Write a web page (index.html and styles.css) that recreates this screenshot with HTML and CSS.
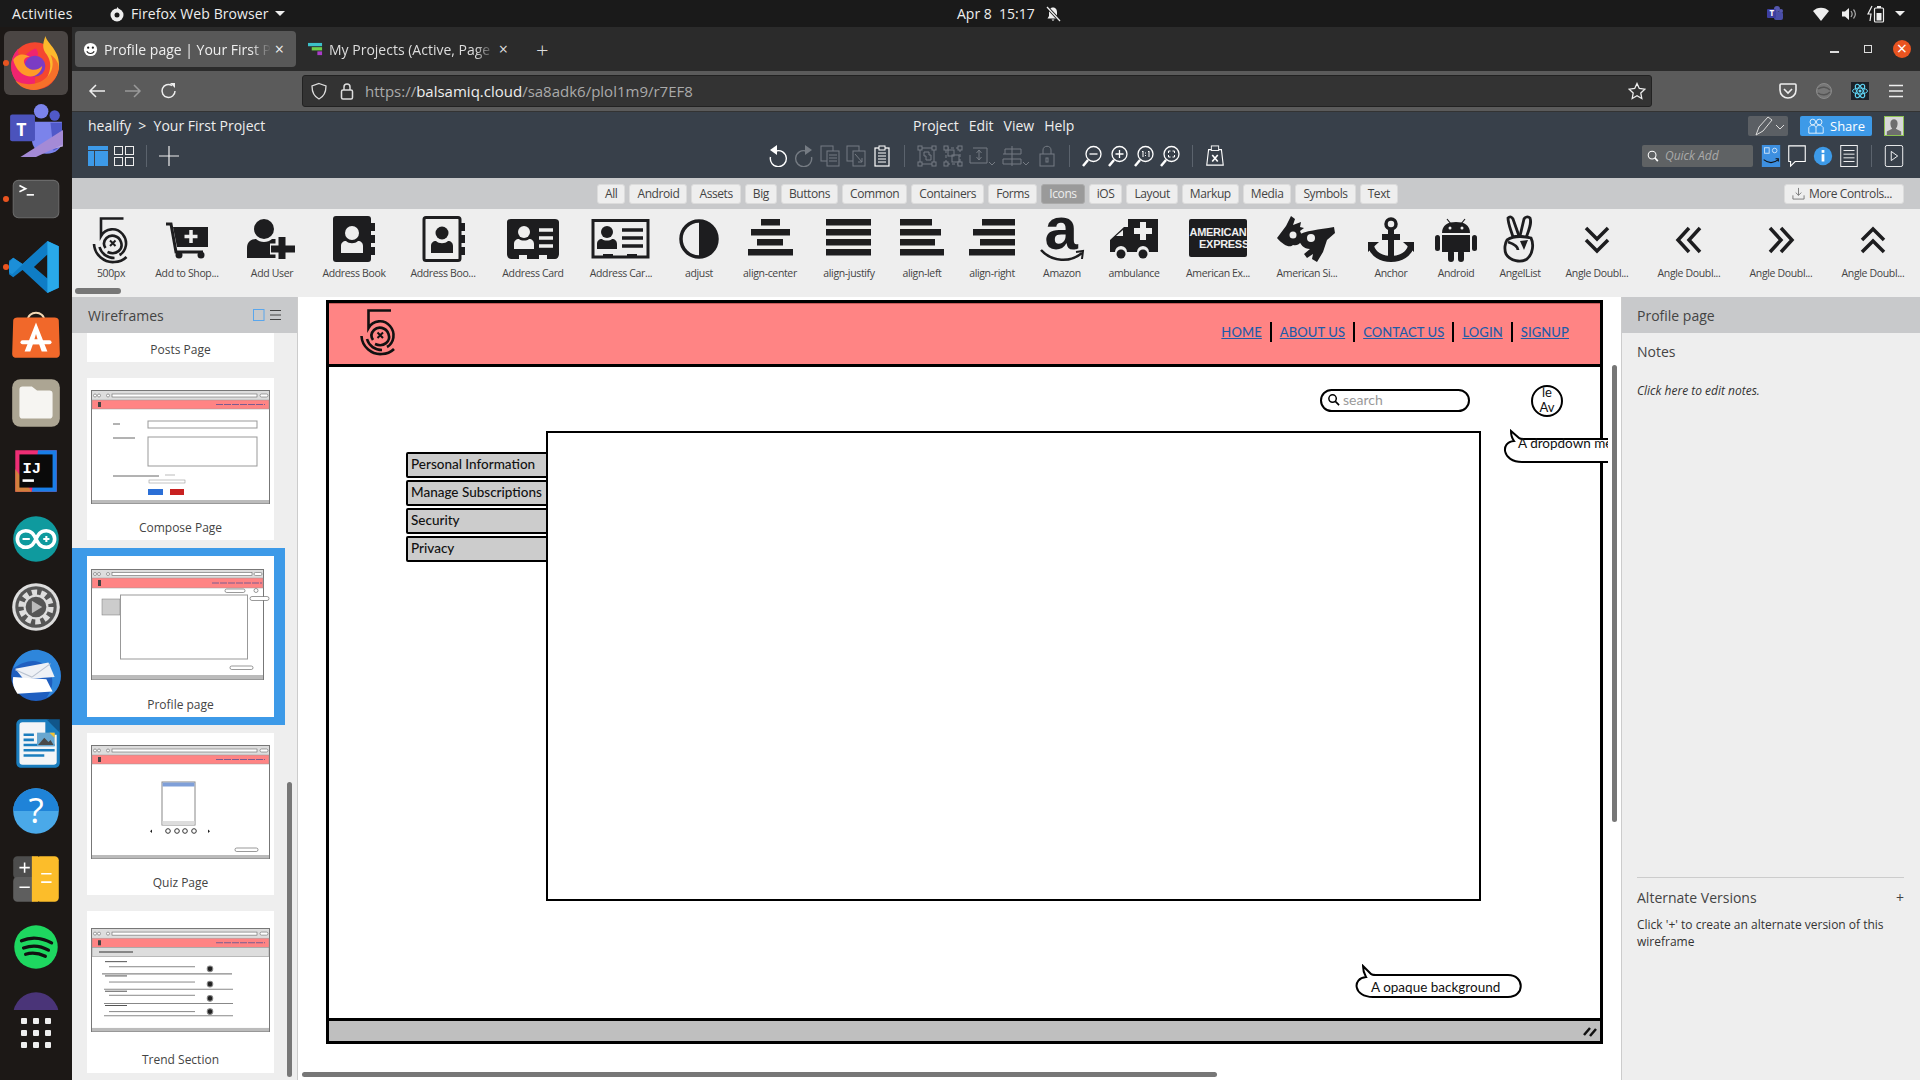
FILE: index.html
```html
<!DOCTYPE html>
<html lang="en">
<head>
    <meta charset="UTF-8">
    <title>Profile page | Your First Project</title>
    <link rel="stylesheet" href="styles.css">
</head>
<body>

    <!-- shared drawings -->
    <svg class="defs" width="0" height="0">
        <symbol id="logo500" viewBox="0 0 37 48">
            <g fill="none" stroke="currentColor" stroke-width="2.6">
                <path d="M31 2.500H8.500V20C13 12 24 11 30 18C36 25 34 35 27 39"/>
                <path d="M15 36C24 40 31 33 28.500 26C26 19 18 18 14 22C11 25 11 29 13 32"/>
                <path d="M1.500 28C2 39 12 47 22 46C27 46 31 44 34 41"/>
                <path d="M7 31C9 38 15 42 22 42"/>
                <path d="M17.500 24.500L23 30M23 24.500L17.500 30" stroke-width="2"/>
            </g>
        </symbol>
        <symbol id="magnifier" viewBox="0 0 20 20">
            <circle cx="11.500" cy="8.500" r="6.500" fill="none" stroke="currentColor" stroke-width="1.700"/>
            <path d="M7 13L2 18.500" stroke="currentColor" stroke-width="2.800"/>
        </symbol>
    </svg>

    <!-- barra di sistema -->
    <header class="topbar">
        <div class="topbar-left">
            <span class="activities">Activities</span>
            <svg class="topbar-ff" viewBox="0 0 16 16"><circle cx="8" cy="9" r="6.500" fill="#eee"/><circle cx="8" cy="9" r="2.500" fill="#1a1a1a"/><path d="M8 1C11 3 10 5 8 6Z" fill="#eee"/></svg>
            <span class="ff-name">Firefox Web Browser</span>
            <span class="caret"></span>
        </div>
        <div class="topbar-clock">
            <span>Apr 8&nbsp;&nbsp;15:17</span>
            <svg class="bell" viewBox="0 0 16 16"><path d="M8 1.500C5 1.500 4 4 4 6V10L2.500 12.500H13.500L12 10V6C12 4 11 1.500 8 1.500ZM6.500 13.500H9.500L8 15Z" fill="#eee"/><path d="M2 1L15 15" stroke="#1a1a1a" stroke-width="3"/><path d="M2 1L15 15" stroke="#eee" stroke-width="1.300"/></svg>
        </div>
        <div class="topbar-tray">
            <svg class="tray-teams" viewBox="0 0 18 18"><circle cx="11" cy="4" r="3" fill="#5558af"/><circle cx="15" cy="6" r="2" fill="#5558af"/><rect x="8" y="7" width="9" height="8" rx="2" fill="#4a4ea8"/><rect x="1" y="4" width="9" height="9" rx="1" fill="#3d3fa0"/><text x="3.500" y="11" class="tray-t">T</text></svg>
            <svg class="tray-ico wifi" viewBox="0 0 16 16"><path d="M0 5C4 0.500 12 0.500 16 5L8 15Z" fill="#eee"/></svg>
            <svg class="tray-ico vol" viewBox="0 0 16 16"><path d="M1 5.500H4L8 2V14L4 10.500H1Z" fill="#eee"/><path d="M10 5C11.500 7 11.500 9 10 11M12.500 3.500C15 6.500 15 9.500 12.500 12.500" fill="none" stroke="#aaa" stroke-width="1.200"/></svg>
            <svg class="tray-ico bat" viewBox="0 0 18 18"><path d="M5 1L1 9H4L3 16" fill="none" stroke="#eee" stroke-width="1.200"/><rect x="7.500" y="3" width="9" height="14" rx="1" fill="none" stroke="#eee" stroke-width="1.200"/><rect x="10" y="1" width="4" height="2" fill="#eee"/><rect x="9.500" y="8" width="5" height="7.500" fill="#eee"/></svg>
            <span class="caret"></span>
        </div>
    </header>

    <div class="desktop">

        <!-- dock -->
        <nav class="dock">
            <div class="dock-list">
                <div class="dock-item dock-active running">
                    <svg viewBox="0 0 56 56">
                        <circle cx="27" cy="31" r="23" fill="#f5462f"/>
                        <path d="M27 54C14 54 4 44 4 31C4 24 7 18 11 14C10 20 12 24 16 25C17 19 24 15 28 14C33 22 27 20 27 31Z" fill="#f0246f"/>
                        <path d="M37 2C39 10 52 16 50 33C48 44 38 52 28 53C42 44 46 28 37 18C33 12 36 6 37 2Z" fill="#fcb92c"/>
                        <path d="M50 33C49 44 38 53 26 54C18 54 12 51 8 45C16 50 30 50 38 42C44 37 46 28 42 20C47 23 50 28 50 33Z" fill="#f6702a"/>
                        <circle cx="27" cy="31" r="10" fill="#7b3cc4"/>
                        <path d="M6 25C10 18 18 19 22 22C18 22 15 25 17 29C20 36 30 36 34 31C33 39 25 43 18 40C12 38 8 32 6 25Z" fill="#ff9a28"/>
                    </svg>
                </div>
                <div class="dock-item">
                    <svg viewBox="0 0 56 56">
                        <circle cx="33" cy="9" r="7" fill="#7b83eb"/><circle cx="46" cy="13" r="5" fill="#5059c9"/>
                        <path d="M24 19H53V37C53 45 47 50 38 50C30 50 24 44 24 36Z" fill="#7b83eb"/>
                        <path d="M42 20H53V36C53 41 50 45 45 47Z" fill="#5059c9"/>
                        <rect x="3" y="12" width="24" height="26" rx="2" fill="#4b53bc"/>
                        <text x="9" y="33" class="dock-t">T</text>
                        <path d="M54 28V43L13 53L26 50Z" fill="#b8a6e0"/><path d="M13 53H28L54 41V27Z" fill="#a48ad6"/>
                    </svg>
                </div>
                <div class="dock-item running">
                    <svg viewBox="0 0 56 56">
                        <rect x="6" y="10" width="44" height="36" rx="5" fill="#4f4f4f" stroke="#6a6a6a"/>
                        <path d="M12 15L18 18L12 21" fill="none" stroke="#fff" stroke-width="1.600"/><path d="M19 24H26" stroke="#fff" stroke-width="1.600"/>
                    </svg>
                </div>
                <div class="dock-item running">
                    <svg viewBox="0 0 56 56">
                        <path d="M39 3L50 8V48L39 53L15 31L6 38L2 35V22L6 19L15 25ZM39 16L26 28L39 39Z" fill="#0f7dc6"/>
                        <path d="M39 3L50 8V48L39 53Z" fill="#29a9ea"/>
                        <path d="M39 3L5 35L2 33V24L6 19L15 25Z" fill="#1c8fd8"/>
                    </svg>
                </div>
                <div class="dock-item">
                    <svg viewBox="0 0 56 56">
                        <path d="M20 14C20 4 36 4 36 14" fill="none" stroke="#f4d9b5" stroke-width="2"/>
                        <path d="M6 14C6 12 8 11 10 11H46C48 11 50 12 50 14L51 46C51 49 49 50 46 50H10C7 50 5 49 5 46Z" fill="#f1682a"/>
                        <path d="M28 16L39 44H33.500L31 37H25L22.500 44H17ZM26.500 32H29.500L28 27Z" fill="#fff"/>
                        <rect x="13" y="33" width="30" height="4" rx="2" fill="#fff"/>
                    </svg>
                </div>
                <div class="dock-item">
                    <svg viewBox="0 0 56 56">
                        <rect x="5" y="5" width="46" height="46" rx="8" fill="#aca593"/>
                        <path d="M12 15C12 13 13 12 15 12H24L29 16H41C43 16 44 17 44 19V40C44 42 43 43 41 43H15C13 43 12 42 12 40Z" fill="#f6f5f2"/>
                    </svg>
                </div>
                <div class="dock-item">
                    <svg viewBox="0 0 56 56">
                        <path d="M8 8H30L48 8V30L48 48H8Z" fill="#ee2e75"/>
                        <path d="M8 26L8 48H24Z" fill="#d2803c"/>
                        <path d="M30 8H48V48H24Z" fill="#197ee8"/>
                        <rect x="12" y="12" width="32" height="32" fill="#0a0a0a"/>
                        <text x="15" y="30" class="dock-ij">IJ</text>
                        <rect x="15" y="36" width="11" height="2.500" fill="#fff"/>
                    </svg>
                </div>
                <div class="dock-item">
                    <svg viewBox="0 0 56 56">
                        <circle cx="28" cy="28" r="22" fill="#0f9a9e"/>
                        <path d="M18 20C14 20 10 23 10 28C10 33 14 36 18 36C24 36 26 32 28 28C30 24 32 20 38 20C42 20 46 23 46 28C46 33 42 36 38 36C32 36 30 32 28 28C26 24 24 20 18 20Z" fill="none" stroke="#fff" stroke-width="3.500"/>
                        <path d="M15 28H22M35 28H41M38 25V31" stroke="#fff" stroke-width="2"/>
                    </svg>
                </div>
                <div class="dock-item">
                    <svg viewBox="0 0 56 56">
                        <circle cx="28" cy="28" r="23" fill="#ddd"/>
                        <circle cx="28" cy="28" r="20" fill="#555"/>
                        <circle cx="28" cy="28" r="14" fill="none" stroke="#ddd" stroke-width="6" stroke-dasharray="5 3.800"/>
                        <circle cx="28" cy="28" r="11" fill="none" stroke="#ddd" stroke-width="2"/>
                        <path d="M24 22L34 28L24 34Z" fill="#bbb"/>
                    </svg>
                </div>
                <div class="dock-item">
                    <svg viewBox="0 0 56 56">
                        <circle cx="28" cy="29" r="24" fill="#1f5fc0"/>
                        <path d="M6 22C9 8 22 2 32 4C44 6 52 16 52 29C52 38 46 47 38 50C46 40 46 26 36 18C28 12 16 14 6 22Z" fill="#2e86db"/>
                        <path d="M8 22L40 16L46 30L16 32Z" fill="#eef1f6"/>
                        <path d="M6 30L38 32L44 44L10 46C6 40 5 36 6 30Z" fill="#fff"/>
                        <path d="M8 23L24 30L42 17" fill="none" stroke="#b9c2d0"/>
                    </svg>
                </div>
                <div class="dock-item">
                    <svg viewBox="0 0 56 56">
                        <path d="M9 10C9 7 11 5 14 5H40L51 16V47C51 50 49 52 46 52H14C11 52 9 50 9 47Z" fill="#1a7dbe"/>
                        <path d="M12 11C12 9 13 8 15 8H37V20H48V46C48 48 47 49 45 49H15C13 49 12 48 12 46Z" fill="#f3f5f7"/>
                        <path d="M38 5L51 18V5Z" fill="#10568a"/>
                        <path d="M16 20H26M16 25H26M16 30H46M16 35H46M16 40H36" stroke="#1a7dbe" stroke-width="2.500"/>
                        <rect x="29" y="18" width="17" height="13" fill="#68a7d0"/><path d="M30 30L36 23L40 27L42 25L45 30Z" fill="#4a4a4a"/><path d="M41 18H46V23Z" fill="#f2c230"/>
                    </svg>
                </div>
                <div class="dock-item">
                    <svg viewBox="0 0 56 56">
                        <circle cx="28" cy="28" r="22" fill="#4aa9e9"/>
                        <path d="M6 28A22 22 0 0 1 50 28Z" fill="#1f83d8"/>
                        <text x="28" y="40" class="dock-help">?</text>
                    </svg>
                </div>
                <div class="dock-item">
                    <svg viewBox="0 0 56 56">
                        <rect x="6" y="6" width="22" height="22" rx="4" fill="#4d4d4d"/>
                        <rect x="6" y="26" width="22" height="24" rx="4" fill="#5e5e5e"/>
                        <rect x="28" y="6" width="22" height="44" rx="4" fill="#fcbd2a"/>
                        <rect x="24" y="6" width="6" height="44" fill="#fcbd2a"/>
                        <path d="M12 17H22M17 12V22M12 36H22M33 23H43M33 31H43" stroke="#fff" stroke-width="1.500"/>
                    </svg>
                </div>
                <div class="dock-item">
                    <svg viewBox="0 0 56 56">
                        <circle cx="28" cy="28" r="21" fill="#1ed760"/>
                        <path d="M14 22C23 18 34 19 43 24M16 29C24 26 33 27 40 31M18 35C24 33 31 34 37 37" fill="none" stroke="#111" stroke-width="3.200" stroke-linecap="round"/>
                    </svg>
                </div>
                <div class="dock-item">
                    <svg viewBox="0 0 56 56"><circle cx="28" cy="28" r="22" fill="#4a3478"/></svg>
                </div>
            </div>
            <div class="dock-apps">
                <i></i><i></i><i></i><i></i><i></i><i></i><i></i><i></i><i></i>
            </div>
        </nav>

        <div class="window">

            <!-- schede firefox -->
            <div class="tabs-row">
                <div class="tab tab-active">
                    <svg class="favicon" viewBox="0 0 16 16"><circle cx="8" cy="8" r="7" fill="#fff"/><circle cx="5.500" cy="6" r="1.200" fill="#222"/><circle cx="10.500" cy="6" r="1.200" fill="#222"/><path d="M4 10C6 13 10 13 12 10" fill="none" stroke="#222" stroke-width="1.200"/></svg>
                    <span class="tab-title">Profile page | Your First P</span>
                    <span class="tab-x">&times;</span>
                </div>
                <div class="tab tab-other">
                    <svg class="favicon" viewBox="0 0 16 16"><rect x="0" y="1" width="15" height="3.500" fill="#3cc0c8"/><rect x="4" y="5.500" width="11" height="3.500" fill="#6fce4c"/><rect x="10" y="10" width="5" height="4" fill="#a93cc8"/></svg>
                    <span class="tab-title">My Projects (Active, Page</span>
                    <span class="tab-x">&times;</span>
                </div>
                <span class="tab-new">+</span>
                <div class="win-controls">
                    <span class="win-min"></span>
                    <span class="win-max"></span>
                    <span class="win-close">&times;</span>
                </div>
            </div>

            <!-- barra indirizzi -->
            <div class="nav-row">
                <svg class="nav-ico" viewBox="0 0 20 20"><path d="M18 10H3M9 4L3 10L9 16" fill="none" stroke="#eee" stroke-width="1.500"/></svg>
                <svg class="nav-ico" viewBox="0 0 20 20"><path d="M2 10H17M11 4L17 10L11 16" fill="none" stroke="#999" stroke-width="1.500"/></svg>
                <svg class="nav-ico" viewBox="0 0 20 20"><path d="M16 10A6.500 6.500 0 1 1 13 4.500" fill="none" stroke="#eee" stroke-width="1.500"/><path d="M11 2H16V7Z" fill="#eee"/></svg>
                <div class="urlbar">
                    <svg class="url-ico" viewBox="0 0 16 18"><path d="M8 1.500L15 4C15 10 13 14.500 8 17C3 14.500 1 10 1 4Z" fill="none" stroke="#ddd" stroke-width="1.300"/></svg>
                    <svg class="url-ico" viewBox="0 0 16 18"><rect x="2.500" y="8" width="11" height="9" rx="1.500" fill="none" stroke="#ddd" stroke-width="1.500"/><path d="M5 8V5C5 1 11 1 11 5V8" fill="none" stroke="#ddd" stroke-width="1.500"/></svg>
                    <span class="url-text">https://<b>balsamiq.cloud</b>/sa8adk6/plol1m9/r7EF8</span>
                    <svg class="url-star" viewBox="0 0 18 18"><path d="M9 1.500L11.300 6.500L16.800 7.200L12.800 11L13.800 16.500L9 13.800L4.200 16.500L5.200 11L1.200 7.200L6.700 6.500Z" fill="none" stroke="#eee" stroke-width="1.300"/></svg>
                </div>
                <div class="nav-tools">
                    <svg viewBox="0 0 18 18"><path d="M2 2H16C16.500 2 17 2.500 17 3V8C17 13 13 16 9 16C5 16 1 13 1 8V3C1 2.500 1.500 2 2 2Z" fill="none" stroke="#eee" stroke-width="1.600"/><path d="M5 7L9 11L13 7" fill="none" stroke="#eee" stroke-width="1.600"/></svg>
                    <svg viewBox="0 0 18 18"><circle cx="9" cy="9" r="7.500" fill="#777" stroke="#8a8a8a"/><path d="M3 7C7 4 12 5 15 8M3 11C7 14 12 13 15 10" fill="none" stroke="#555" stroke-width="1.500"/></svg>
                    <svg viewBox="0 0 18 18"><rect width="18" height="18" fill="#1c2128"/><g fill="none" stroke="#5fd4f4" stroke-width="1"><ellipse cx="9" cy="9" rx="7.500" ry="3"/><ellipse cx="9" cy="9" rx="7.500" ry="3" transform="rotate(60 9 9)"/><ellipse cx="9" cy="9" rx="7.500" ry="3" transform="rotate(120 9 9)"/></g><circle cx="9" cy="9" r="1.500" fill="#5fd4f4"/></svg>
                    <svg viewBox="0 0 18 18"><path d="M2 3.500H16M2 9H16M2 14.500H16" stroke="#eee" stroke-width="1.500"/></svg>
                </div>
            </div>

            <!-- testata balsamiq -->
            <div class="app-head">
                <div class="head-row head-row-top">
                    <div class="crumbs">healify &nbsp;&gt;&nbsp; Your First Project</div>
                    <div class="menu"><span>Project</span><span>Edit</span><span>View</span><span>Help</span></div>
                    <div class="head-right">
                        <div class="pen-btn">
                            <svg viewBox="0 0 28 20"><path d="M2 19L5 11L14 1L18 4L9 15Z" fill="none" stroke="#ddd" stroke-width="1"/><path d="M22 9L26 13L30 9" fill="none" stroke="#ddd" stroke-width="1"/></svg>
                        </div>
                        <div class="share-btn">
                            <svg viewBox="0 0 20 20"><circle cx="6" cy="5" r="3.500" fill="none" stroke="#fff"/><circle cx="14" cy="5" r="3.500" fill="none" stroke="#fff"/><path d="M1 19V12L4 9H8L10 12L12 9H16L19 12V19ZM10 12V19" fill="none" stroke="#fff"/></svg>
                            <span>Share</span>
                        </div>
                        <div class="user-pic">
                            <svg viewBox="0 0 20 20"><rect width="20" height="20" fill="#d8d8d8"/><path d="M6 7C6 1 14 1 14 7C14 10 13 12 12 13L18 16V20H2V16L8 13C7 12 6 10 6 7Z" fill="#6e6e6e"/></svg>
                        </div>
                    </div>
                </div>
                <div class="head-row head-row-tools">
                    <div class="view-btns">
                        <svg viewBox="0 0 20 20"><rect width="20" height="20" fill="#3d9ae8"/><path d="M0 4.500H20M6.500 4.500V20" stroke="#38404a"/></svg>
                        <svg viewBox="0 0 20 20"><g fill="none" stroke="#eee"><rect x="0.500" y="0.500" width="8" height="8"/><rect x="11.500" y="0.500" width="8" height="8"/><rect x="0.500" y="11.500" width="8" height="8"/><rect x="11.500" y="11.500" width="8" height="8"/></g></svg>
                        <i class="tb-sep"></i>
                        <svg viewBox="0 0 20 20"><path d="M10 0V20M0 10H20" stroke="#eee" stroke-width="1.200"/></svg>
                    </div>
                    <div class="toolbar">
                        <svg viewBox="0 0 20 22"><path d="M8 6A8 8 0 1 1 2.500 12" fill="none" stroke="#fff" stroke-width="1.400"/><path d="M9 0V10L2 5Z" fill="#fff"/></svg>
                        <svg class="off" viewBox="0 0 20 22"><path d="M12 6A8 8 0 1 0 17.500 12" fill="none" stroke="#757b83" stroke-width="1.400"/><path d="M11 0V10L18 5Z" fill="#757b83"/></svg>
                        <svg class="off" viewBox="0 0 20 22"><g fill="#38404a" stroke="#757b83"><rect x="1" y="1" width="12" height="15"/><rect x="7" y="6" width="12" height="15"/></g><path d="M9 10H17M9 13H17M9 16H17" stroke="#757b83"/></svg>
                        <svg class="off" viewBox="0 0 20 22"><g fill="#38404a" stroke="#757b83"><rect x="1" y="1" width="12" height="15"/><rect x="7" y="6" width="12" height="15"/></g><path d="M9 9L16 17M16 13V17H12" fill="none" stroke="#757b83"/></svg>
                        <svg viewBox="0 0 20 22"><rect x="3" y="3" width="14" height="18" fill="#38404a" stroke="#fff" stroke-width="1.200"/><rect x="7" y="1" width="6" height="4" fill="#38404a" stroke="#fff"/><path d="M6 8H14M6 11H14M6 14H14M6 17H14" stroke="#fff"/></svg>
                        <i class="tb-sep"></i>
                        <svg viewBox="0 0 20 22"><g fill="none" stroke="#757b83"><rect x="3" y="3" width="14" height="16"/><path d="M7 7H12V10H14V15H9V11H7Z"/></g><g fill="#38404a" stroke="#757b83"><rect x="1" y="1" width="4" height="4"/><rect x="15" y="1" width="4" height="4"/><rect x="1" y="17" width="4" height="4"/><rect x="15" y="17" width="4" height="4"/></g></svg>
                        <svg viewBox="0 0 20 22"><g fill="none" stroke="#757b83"><rect x="3" y="3" width="14" height="16" stroke-dasharray="3 2"/><rect x="5" y="5" width="6" height="6"/><rect x="9" y="10" width="7" height="7"/></g><g fill="#38404a" stroke="#757b83"><rect x="1" y="1" width="4" height="4"/><rect x="15" y="1" width="4" height="4"/><rect x="1" y="17" width="4" height="4"/><rect x="15" y="17" width="4" height="4"/></g></svg>
                        <svg class="caret-ico" viewBox="0 0 27 22"><g fill="none" stroke="#757b83"><path d="M4 3H18V18H1V10"/><path d="M10 5V15M7.500 8L10 5L12.500 8M7.500 12L10 15L12.500 12"/><path d="M20 17L23 20L26 17"/></g></svg>
                        <svg class="caret-ico" viewBox="0 0 27 22"><g fill="none" stroke="#757b83"><path d="M10 1V21M1 9H19V4H3V9M1 14H19V19H1Z"/><path d="M21 17L24 20L27 17"/></g></svg>
                        <svg class="tb-lock" viewBox="0 0 20 22"><g fill="none" stroke="#757b83"><rect x="3" y="9" width="14" height="12"/><path d="M6 9V5C6 0 14 0 14 5V9"/><rect x="9" y="13" width="2" height="4"/></g></svg>
                        <i class="tb-sep"></i>
                        <svg viewBox="0 0 20 22"><circle cx="11.500" cy="9" r="7.500" fill="none" stroke="#fff" stroke-width="1.300"/><path d="M6 15L1 21" stroke="#fff" stroke-width="2.500"/><path d="M7.500 9H15.500" stroke="#fff" stroke-width="1.300"/></svg>
                        <svg viewBox="0 0 20 22"><circle cx="11.500" cy="9" r="7.500" fill="none" stroke="#fff" stroke-width="1.300"/><path d="M6 15L1 21" stroke="#fff" stroke-width="2.500"/><path d="M7.500 9H15.500M11.500 5V13" stroke="#fff" stroke-width="1.300"/></svg>
                        <svg viewBox="0 0 20 22"><circle cx="11.500" cy="9" r="7.500" fill="none" stroke="#fff" stroke-width="1.300"/><path d="M6 15L1 21" stroke="#fff" stroke-width="2.500"/><path d="M8 7L9 6V12M14 7L15 6V12M11.500 7.500V8.500M11.500 10V11" fill="none" stroke="#fff"/></svg>
                        <svg viewBox="0 0 20 22"><circle cx="11.500" cy="9" r="7.500" fill="none" stroke="#fff" stroke-width="1.300"/><path d="M6 15L1 21" stroke="#fff" stroke-width="2.500"/><path d="M8.500 8V6H10.500M12.500 6H14.500V8M14.500 10V12H12.500M10.500 12H8.500V10" fill="none" stroke="#fff"/></svg>
                        <i class="tb-sep"></i>
                        <svg viewBox="0 0 20 24"><path d="M3 5H17L19 22H1Z" fill="none" stroke="#fff" stroke-width="1.200"/><rect x="6" y="1" width="8" height="5" fill="#38404a" stroke="#fff"/><path d="M7 11L13 18M13 11L7 18" stroke="#fff" stroke-width="1.800"/></svg>
                    </div>
                    <div class="head-right">
                        <div class="quick-add">
                            <svg viewBox="0 0 20 20"><use href="#magnifier"/></svg>
                            <span>Quick Add</span>
                        </div>
                        <div class="tb-side">
                            <svg viewBox="0 0 20 24"><rect width="20" height="24" fill="#3d8fe0"/><rect x="3" y="3" width="5" height="6" fill="none" stroke="#cfe4f8"/><circle cx="14" cy="6" r="2.500" fill="none" stroke="#cfe4f8"/><path d="M2 16C7 20 13 20 18 16M15 15H18V18" fill="none" stroke="#111" stroke-width="1.200"/></svg>
                            <svg viewBox="0 0 20 24"><path d="M1 1H19V18H8L3 23V18H1Z" fill="none" stroke="#fff" stroke-width="1.200"/></svg>
                            <svg viewBox="0 0 20 24"><circle cx="10" cy="12" r="10" fill="#3d9ae8"/><rect x="8.500" y="10" width="3" height="8" fill="#fff"/><rect x="8.500" y="5.500" width="3" height="3" fill="#fff"/></svg>
                            <svg viewBox="0 0 20 24"><rect x="1" y="0.500" width="18" height="23" fill="none" stroke="#fff"/><path d="M4 6H16M4 10H16M4 14H16M4 18H16" stroke="#fff"/></svg>
                            <i class="tb-sep"></i>
                            <svg viewBox="0 0 20 24"><rect x="0.500" y="0.500" width="19" height="23" rx="2" fill="none" stroke="#fff"/><path d="M7 7L14 12L7 17Z" fill="none" stroke="#fff"/></svg>
                        </div>
                    </div>
                </div>
            </div>

            <!-- categorie -->
            <div class="cats">
                <span class="cat">All</span>
                <span class="cat">Android</span>
                <span class="cat">Assets</span>
                <span class="cat">Big</span>
                <span class="cat">Buttons</span>
                <span class="cat">Common</span>
                <span class="cat">Containers</span>
                <span class="cat">Forms</span>
                <span class="cat cat-on">Icons</span>
                <span class="cat">iOS</span>
                <span class="cat">Layout</span>
                <span class="cat">Markup</span>
                <span class="cat">Media</span>
                <span class="cat">Symbols</span>
                <span class="cat">Text</span>
                <span class="cat more-controls">
                    <svg viewBox="0 0 14 14"><path d="M7 1V9M4 6L7 9L10 6M1 9V13H13V9" fill="none" stroke="#777"/></svg>
                    More Controls...
                </span>
            </div>

            <!-- libreria icone -->
            <div class="library">
                <div class="lib-item"><svg class="lib-logo"><use href="#logo500"/></svg><span>500px</span></div>
                <div class="lib-item">
                    <svg viewBox="-8 0 64 48"><path d="M3 8H8L13 36H40" fill="none" stroke="#1d1d1f" stroke-width="3"/><path d="M10 11H45V31H14Z" fill="#1d1d1f"/><path d="M28 14V27M21.500 20.500H34.500" stroke="#eee" stroke-width="3.500"/><circle cx="16" cy="39" r="3.500" fill="#1d1d1f"/><circle cx="38" cy="39" r="3.500" fill="#1d1d1f"/></svg>
                    <span>Add to Shop...</span>
                </div>
                <div class="lib-item">
                    <svg viewBox="-8 0 64 48"><circle cx="16" cy="13" r="10" fill="#1d1d1f"/><path d="M-1 42V32C-1 26 3 23 8 23C12 27 20 27 24 23H30V42Z" fill="#1d1d1f"/><path d="M33 21V45M22 33H47" stroke="#eee" stroke-width="11"/><path d="M34 21V43M23 33H47" stroke="#1d1d1f" stroke-width="7"/></svg>
                    <span>Add User</span>
                </div>
                <div class="lib-item">
                    <svg viewBox="-8 0 64 48"><rect x="3" y="0" width="38" height="46" rx="3" fill="#1d1d1f"/><path d="M41 7H45V15H41M41 19H45V27H41M41 31H45V39H41" fill="#1d1d1f"/><circle cx="22" cy="17" r="7" fill="#eee"/><path d="M11 37V30C11 27 13 25 16 25C19 28 25 28 28 25C31 25 33 27 33 30V37Z" fill="#eee"/></svg>
                    <span>Address Book</span>
                </div>
                <div class="lib-item">
                    <svg viewBox="-8 0 64 48"><rect x="5" y="1.500" width="36" height="43" rx="2" fill="none" stroke="#1d1d1f" stroke-width="3"/><path d="M42 7H46V15H42M42 19H46V27H42M42 31H46V39H42" fill="#1d1d1f"/><circle cx="23" cy="17" r="6.500" fill="#1d1d1f"/><path d="M12 37V30C12 27 14 25 17 25C20 28 26 28 29 25C32 25 34 27 34 30V37Z" fill="#1d1d1f"/></svg>
                    <span>Address Boo...</span>
                </div>
                <div class="lib-item">
                    <svg viewBox="-8 0 64 48"><path d="M-2 6C-2 4 0 3 2 3H46C48 3 50 4 50 6V38C50 41 48 43 46 43H38V39H30V43H18V39H10V43H2C0 43 -2 41 -2 38Z" fill="#1d1d1f"/><circle cx="15" cy="16" r="6" fill="#eee"/><path d="M5 33V28C5 25 7 23 10 23C12 25 18 25 20 23C23 23 25 25 25 28V33Z" fill="#eee"/><path d="M30 14H44M30 22H44M30 30H44" stroke="#eee" stroke-width="3.500"/></svg>
                    <span>Address Card</span>
                </div>
                <div class="lib-item">
                    <svg viewBox="-8 0 64 48"><path d="M-4 4.500H51V41H-4Z" fill="none" stroke="#1d1d1f" stroke-width="3"/><path d="M6 42V38H16V42M30 42V38H40V42" fill="#1d1d1f"/><circle cx="10" cy="16" r="6" fill="#1d1d1f"/><path d="M0 33V28C0 25 2 23 5 23C7 25 13 25 15 23C18 23 20 25 20 28V33Z" fill="#1d1d1f"/><path d="M25 14H46M25 22H46M25 30H46" stroke="#1d1d1f" stroke-width="3.500"/></svg>
                    <span>Address Car...</span>
                </div>
                <div class="lib-item">
                    <svg viewBox="-8 0 64 48"><circle cx="24" cy="23" r="18" fill="#eee" stroke="#1d1d1f" stroke-width="3.500"/><path d="M24 5A18 18 0 0 1 24 41Z" fill="#1d1d1f"/></svg>
                    <span>adjust</span>
                </div>
                <div class="lib-item">
                    <svg viewBox="-8 0 64 48"><g fill="#1d1d1f"><rect x="15" y="3" width="19" height="6.500"/><rect x="5" y="13" width="39" height="6.500"/><rect x="11" y="23" width="26" height="6.500"/><rect x="2" y="33" width="45" height="6.500"/></g></svg>
                    <span>align-center</span>
                </div>
                <div class="lib-item">
                    <svg viewBox="-8 0 64 48"><g fill="#1d1d1f"><rect x="1" y="3" width="45" height="6.500"/><rect x="1" y="13" width="45" height="6.500"/><rect x="1" y="23" width="45" height="6.500"/><rect x="1" y="33" width="45" height="6.500"/></g></svg>
                    <span>align-justify</span>
                </div>
                <div class="lib-item">
                    <svg viewBox="-8 0 64 48"><g fill="#1d1d1f"><rect x="2" y="3" width="32" height="6.500"/><rect x="2" y="13" width="41" height="6.500"/><rect x="2" y="23" width="35" height="6.500"/><rect x="2" y="33" width="44" height="6.500"/></g></svg>
                    <span>align-left</span>
                </div>
                <div class="lib-item">
                    <svg viewBox="-8 0 64 48"><g fill="#1d1d1f"><rect x="14" y="3" width="33" height="6.500"/><rect x="5" y="13" width="42" height="6.500"/><rect x="12" y="23" width="35" height="6.500"/><rect x="1" y="33" width="46" height="6.500"/></g></svg>
                    <span>align-right</span>
                </div>
                <div class="lib-item">
                    <svg viewBox="-8 0 64 48"><text x="23" y="33" class="lib-amazon">a</text><path d="M3 34C14 46 32 47 44 37" fill="none" stroke="#1d1d1f" stroke-width="2.500"/><path d="M38 36L45 35L44 43" fill="none" stroke="#1d1d1f" stroke-width="2"/></svg>
                    <span>Amazon</span>
                </div>
                <div class="lib-item">
                    <svg viewBox="-8 0 64 48"><path d="M14 11H18V3H48V36H39A6 6 0 0 0 27 36H17A6 6 0 0 0 5 36H0V24Z" fill="#1d1d1f"/><circle cx="11" cy="38" r="4.500" fill="#1d1d1f"/><circle cx="33" cy="38" r="4.500" fill="#1d1d1f"/><path d="M33 6V24M24 15H42" stroke="#eee" stroke-width="6"/><path d="M6 20H13V14Z" fill="#eee"/></svg>
                    <span>ambulance</span>
                </div>
                <div class="lib-item">
                    <svg viewBox="-8 0 64 48"><rect x="-5" y="3" width="58" height="38" rx="2" fill="#1d1d1f"/><text x="24" y="20" class="lib-amex">AMERICAN</text><text x="30" y="32" class="lib-amex">EXPRESS</text></svg>
                    <span>American Ex...</span>
                </div>
                <div class="lib-item">
                    <svg viewBox="-8 0 64 48"><path d="M-6 22L3 10L8 0L12 3L10 9L18 6L17 11L21 12L17 15C22 24 16 31 10 29C7 32 1 30 -6 22Z" fill="#1d1d1f"/><circle cx="10" cy="19" r="3.500" fill="#eee"/><path d="M14 20C22 14 36 14 51 11L52 17L44 24L40 36L34 46L29 43L30 38L24 42L21 38L27 33C21 33 17 29 14 20Z" fill="#1d1d1f"/><circle cx="28" cy="22" r="4" fill="#eee"/></svg>
                    <span>American Si...</span>
                </div>
                <div class="lib-item">
                    <svg viewBox="-8 0 64 48"><circle cx="24" cy="8" r="5" fill="none" stroke="#1d1d1f" stroke-width="3.500"/><path d="M24 13V41M15 21H33" stroke="#1d1d1f" stroke-width="6"/><path d="M4 30C6 38 14 43 24 43C34 43 42 38 44 30" fill="none" stroke="#1d1d1f" stroke-width="6"/><path d="M1 26H12L1 36ZM47 26H36L47 36Z" fill="#1d1d1f"/></svg>
                    <span>Anchor</span>
                </div>
                <div class="lib-item">
                    <svg viewBox="-8 0 64 48"><path d="M10 17C10 9 16 6 24 6C32 6 38 9 38 17Z" fill="#1d1d1f"/><path d="M15 3L19 8M33 3L29 8" stroke="#1d1d1f" stroke-width="1.200"/><circle cx="18" cy="12" r="1.500" fill="#eee"/><circle cx="30" cy="12" r="1.500" fill="#eee"/><path d="M10 19H38V36H10Z" fill="#1d1d1f"/><rect x="3" y="19" width="5" height="16" rx="2.500" fill="#1d1d1f"/><rect x="40" y="19" width="5" height="16" rx="2.500" fill="#1d1d1f"/><rect x="16" y="34" width="6" height="12" rx="3" fill="#1d1d1f"/><rect x="26" y="34" width="6" height="12" rx="3" fill="#1d1d1f"/></svg>
                    <span>Android</span>
                </div>
                <div class="lib-item">
                    <svg viewBox="-8 0 64 48"><g fill="#eee" stroke="#1d1d1f" stroke-width="2.800"><path d="M12 2C14 0 16 1 17 3L23 20L17 21C15 14 12 8 12 2Z"/><path d="M34 2C32 0 29 1 28 3L24 20L30 22C33 14 36 7 34 2Z"/><path d="M11 24C17 20 27 20 35 22C38 28 37 38 31 43C25 47 14 45 10 38C8 33 9 27 11 24Z"/><path d="M12 26C18 28 22 30 22 34"/></g><path d="M24 25L32 24L28 34Z" fill="#1d1d1f"/></svg>
                    <span>AngelList</span>
                </div>
                <div class="lib-item">
                    <svg viewBox="-8 0 64 48"><path d="M13 12L24 23L35 12M13 24L24 35L35 24" fill="none" stroke="#1d1d1f" stroke-width="3.500"/></svg>
                    <span>Angle Doubl...</span>
                </div>
                <div class="lib-item">
                    <svg viewBox="-8 0 64 48"><path d="M24 12L13 24L24 36M35 12L24 24L35 36" fill="none" stroke="#1d1d1f" stroke-width="3.500"/></svg>
                    <span>Angle Doubl...</span>
                </div>
                <div class="lib-item">
                    <svg viewBox="-8 0 64 48"><path d="M13 12L24 24L13 36M24 12L35 24L24 36" fill="none" stroke="#1d1d1f" stroke-width="3.500"/></svg>
                    <span>Angle Doubl...</span>
                </div>
                <div class="lib-item">
                    <svg viewBox="-8 0 64 48"><path d="M13 24L24 13L35 24M13 36L24 25L35 36" fill="none" stroke="#1d1d1f" stroke-width="3.500"/></svg>
                    <span>Angle Doubl...</span>
                </div>
                <i class="lib-scroll"></i>
            </div>

            <div class="workspace">

                <!-- pannello wireframes -->
                <aside class="wf-panel">
                    <div class="panel-head">
                        <span>Wireframes</span>
                        <svg class="panel-ico" viewBox="0 0 28 12"><rect x="0.500" y="0.500" width="10.500" height="11" fill="none" stroke="#5aa6ec"/><path d="M17 1.500H28M17 6H28M17 10.500H28" stroke="#444"/></svg>
                    </div>
                    <div class="thumbs">
                        <div class="thumb thumb-cut"><span>Posts Page</span></div>

                        <div class="thumb">
                            <svg class="thumb-pic thumb-pic-compose" viewBox="0 0 179 114">
                                <rect x="0.500" y="0.500" width="178" height="113" fill="#fff" stroke="#777"/>
                                <rect x="1" y="1" width="177" height="9" fill="#ddd"/>
                                <g fill="#fff" stroke="#666" stroke-width="0.600"><circle cx="4" cy="5.500" r="1.500"/><circle cx="8" cy="5.500" r="1.500"/><circle cx="17" cy="5.500" r="1.500"/><rect x="21" y="4" width="145" height="3"/><rect x="169" y="4" width="8" height="3" rx="1.500"/></g>
                                <rect x="1" y="10" width="177" height="9" fill="#ff8484" stroke="#999" stroke-width="0.500"/>
                                <path d="M7 12H10V17H7Z" fill="#444"/><path d="M125 14.500H174" stroke="#7a5c90" stroke-dasharray="7 1"/>
                                <g fill="#fff" stroke="#999"><rect x="57" y="31" width="109" height="7"/><rect x="57" y="47" width="109" height="29"/></g>
                                <g stroke="#666"><path d="M22 34H29"/><path d="M22 48H44"/><path d="M22 86H68"/><path d="M74 85H84" stroke="#bbb"/></g>
                                <rect x="58" y="90" width="36" height="3" fill="#fff" stroke="#888" stroke-width="0.500"/>
                                <rect x="57" y="99" width="15" height="6" fill="#2b6fd6"/><rect x="79" y="99" width="14" height="6" fill="#c82121"/>
                                <rect x="1" y="110" width="177" height="3.500" fill="#bbb"/>
                            </svg>
                            <span>Compose Page</span>
                        </div>

                        <div class="thumb-selected">
                            <div class="thumb">
                                <svg class="thumb-pic thumb-pic-profile" viewBox="0 0 179 111">
                                    <rect x="0.500" y="0.500" width="172" height="110" fill="#fff" stroke="#777"/>
                                    <rect x="1" y="1" width="171" height="8" fill="#ddd"/>
                                    <g fill="#fff" stroke="#666" stroke-width="0.600"><circle cx="4" cy="5" r="1.500"/><circle cx="8" cy="5" r="1.500"/><circle cx="17" cy="5" r="1.500"/><rect x="21" y="3.500" width="140" height="3"/><rect x="163" y="3.500" width="8" height="3" rx="1.500"/></g>
                                    <rect x="1" y="9" width="171" height="10" fill="#ff8484" stroke="#999" stroke-width="0.500"/>
                                    <path d="M7 11H10V17H7Z" fill="#444"/><path d="M121 14H171" stroke="#7a5c90" stroke-dasharray="7 1"/>
                                    <rect x="134" y="20" width="20" height="3.500" rx="1.700" fill="#fff" stroke="#555" stroke-width="0.600"/>
                                    <circle cx="165" cy="21.500" r="2" fill="#fff" stroke="#555" stroke-width="0.600"/>
                                    <rect x="11" y="30" width="18" height="16" fill="#ccc" stroke="#777" stroke-width="0.500"/>
                                    <rect x="29.500" y="26" width="127" height="64" fill="#fff" stroke="#999"/>
                                    <rect x="159" y="27.500" width="19" height="4" rx="2" fill="#fff" stroke="#555" stroke-width="0.600"/>
                                    <rect x="139" y="97" width="23" height="3.500" rx="1.700" fill="#fff" stroke="#555" stroke-width="0.600"/>
                                    <rect x="1" y="106" width="171" height="4.500" fill="#bbb"/>
                                </svg>
                                <span>Profile page</span>
                            </div>
                        </div>

                        <div class="thumb">
                            <svg class="thumb-pic" viewBox="0 0 179 114">
                                <rect x="0.500" y="0.500" width="178" height="113" fill="#fff" stroke="#777"/>
                                <rect x="1" y="1" width="177" height="9" fill="#ddd"/>
                                <g fill="#fff" stroke="#666" stroke-width="0.600"><circle cx="4" cy="5.500" r="1.500"/><circle cx="8" cy="5.500" r="1.500"/><circle cx="17" cy="5.500" r="1.500"/><rect x="21" y="4" width="145" height="3"/><rect x="169" y="4" width="8" height="3" rx="1.500"/></g>
                                <rect x="1" y="10" width="177" height="9" fill="#ff8484" stroke="#999" stroke-width="0.500"/>
                                <path d="M7 12H10V17H7Z" fill="#444"/><path d="M125 14.500H174" stroke="#7a5c90" stroke-dasharray="7 1"/>
                                <rect x="71" y="37" width="33" height="43" fill="#fff" stroke="#888"/>
                                <rect x="71.500" y="37.500" width="32" height="4" fill="#7f9fd8"/>
                                <rect x="71.500" y="76" width="32" height="4" fill="#ddd"/>
                                <g fill="#fff" stroke="#333"><circle cx="77" cy="86" r="2.300"/><circle cx="86" cy="86" r="2.300"/><circle cx="94" cy="86" r="2.300"/><circle cx="103" cy="86" r="2.300"/></g>
                                <path d="M61 84.500V88L59 86.300ZM117 84.500V88L119 86.300Z" fill="#222"/>
                                <rect x="144" y="103" width="23" height="3.500" rx="1.700" fill="#fff" stroke="#555" stroke-width="0.600"/>
                                <rect x="1" y="110" width="177" height="3.500" fill="#bbb"/>
                            </svg>
                            <span>Quiz Page</span>
                        </div>

                        <div class="thumb thumb-last">
                            <svg class="thumb-pic thumb-pic-trend" viewBox="0 0 179 102" preserveAspectRatio="none">
                                <rect x="0.500" y="0.500" width="178" height="101" fill="#fff" stroke="#777"/>
                                <rect x="1" y="1" width="177" height="9" fill="#ddd"/>
                                <g fill="#fff" stroke="#666" stroke-width="0.600"><circle cx="4" cy="5.500" r="1.500"/><circle cx="8" cy="5.500" r="1.500"/><circle cx="17" cy="5.500" r="1.500"/><rect x="21" y="4" width="145" height="3"/><rect x="169" y="4" width="8" height="3" rx="1.500"/></g>
                                <rect x="1" y="10" width="177" height="9" fill="#ff8484" stroke="#999" stroke-width="0.500"/>
                                <path d="M7 12H10V17H7Z" fill="#444"/><path d="M125 14.500H174" stroke="#7a5c90" stroke-dasharray="7 1"/>
                                <rect x="1" y="19" width="177" height="9" fill="#ddd" stroke="#888" stroke-width="0.500"/>
                                <path d="M8 23.500H42" stroke="#333"/>
                                <g stroke="#555">
                                    <path d="M14 33H36"/><path d="M18 38H104" stroke-width="0.700"/><path d="M11 45H141" stroke="#888"/>
                                    <path d="M14 47H36"/><path d="M18 53H104" stroke-width="0.700"/><path d="M13 60H142" stroke="#888"/>
                                    <path d="M14 62H36"/><path d="M18 66H104" stroke-width="0.700"/><path d="M13 74H142" stroke="#888"/>
                                    <path d="M14 76H36"/><path d="M18 82H104" stroke-width="0.700"/><path d="M13 86H142" stroke="#888"/>
                                </g>
                                <g fill="#222" stroke="#888"><circle cx="119" cy="40" r="2.800"/><circle cx="119" cy="55" r="2.800"/><circle cx="119" cy="69" r="2.800"/><circle cx="119" cy="82" r="2.800"/></g>
                                <rect x="1" y="98" width="177" height="3.500" fill="#bbb"/>
                            </svg>
                            <span>Trend Section</span>
                        </div>
                    </div>
                    <i class="thumbs-scroll"></i>
                </aside>

                <!-- area di disegno -->
                <main class="canvas">
                    <div class="wf">
                        <div class="wf-head">
                            <svg class="wf-logo"><use href="#logo500"/></svg>
                            <div class="wf-links">
                                <a>HOME</a><a>ABOUT US</a><a>CONTACT US</a><a>LOGIN</a><a>SIGNUP</a>
                            </div>
                        </div>
                        <div class="wf-body">
                            <div class="wf-search">
                                <svg viewBox="0 0 14 14"><circle cx="6" cy="6" r="4" fill="none" stroke="#000" stroke-width="1.600"/><path d="M9 9L13 13" stroke="#000" stroke-width="1.800"/></svg>
                                <span>search</span>
                            </div>
                            <div class="wf-avatar">
                                <span>le</span>
                                <span>Av</span>
                            </div>
                            <div class="wf-side">
                                <div>Personal Information</div>
                                <div>Manage Subscriptions</div>
                                <div>Security</div>
                                <div>Privacy</div>
                            </div>
                            <div class="wf-box"></div>
                            <div class="callout callout-menu">
                                <svg viewBox="0 0 146 36"><path d="M9 2L17 9C18 10 19 10 22 10H160V33H20C0 33 -2 13 12 12C9 8 9 5 9 2Z" fill="#fff" stroke="#000" stroke-width="2"/></svg>
                                <span>A dropdown me</span>
                            </div>
                            <div class="callout callout-bg">
                                <svg viewBox="0 0 172 36"><path d="M10 2L18 10C19 11 20 11 23 11H155C172 11 172 33 155 33H20C0 33 -1 14 13 13C10 8 10 5 10 2Z" fill="#fff" stroke="#000" stroke-width="2"/></svg>
                                <span>A opaque background</span>
                            </div>
                        </div>
                        <div class="wf-foot">
                            <svg viewBox="0 0 16 14"><path d="M2 11L8 4M8 12L14 5" stroke="#111" stroke-width="2.500"/></svg>
                        </div>
                    </div>
                    <i class="canvas-scroll-v"></i>
                    <i class="canvas-scroll-h"></i>
                </main>

                <!-- pannello destro -->
                <aside class="info-panel">
                    <div class="panel-head"><span>Profile page</span></div>
                    <div class="info-body">
                        <h4>Notes</h4>
                        <p class="info-hint">Click here to edit notes.</p>
                    </div>
                    <div class="info-alt">
                        <h4>Alternate Versions <span>+</span></h4>
                        <p>Click '+' to create an alternate version of this wireframe</p>
                    </div>
                </aside>
            </div>
        </div>
    </div>

</body>
</html>
```
FILE: styles.css
```css
* {
    box-sizing: border-box;
}

html, body {
    margin: 0;
    padding: 0;
    width: 1920px;
    height: 1080px;
    overflow: hidden;
}

body {
    font-family: "Open Sans", "Noto Sans", sans-serif;
    font-size: 14px;
    color: #333;
    background-color: #1c1816;
}

svg {
    display: block;
    flex-shrink: 0;
}

i {
    display: block;
}

.defs {
    position: absolute;
}

/* Barra di sistema */
.topbar {
    height: 27px;
    background-color: #1a1a1a;
    color: #eee;
    display: grid;
    grid-template-columns: 957px 1fr auto;
    align-items: center;
}

.topbar-left {
    display: flex;
    align-items: center;
    padding-left: 12px;
}

.activities {
    width: 97px;
    letter-spacing: 0.3px;
}

.ff-name {
    letter-spacing: 0.1px;
}

.topbar-ff {
    width: 16px;
    height: 16px;
    margin-right: 6px;
}

.caret {
    width: 0;
    height: 0;
    border-left: 5px solid transparent;
    border-right: 5px solid transparent;
    border-top: 5px solid #eee;
    margin-left: 6px;
}

.topbar-clock {
    display: flex;
    align-items: center;
    gap: 10px;
}

.bell {
    width: 16px;
    height: 16px;
}

.topbar-tray {
    display: flex;
    align-items: center;
    padding-right: 15px;
}

.tray-teams {
    width: 18px;
    height: 18px;
    margin-right: 29px;
}

.tray-t {
    font: bold 8px "Open Sans", sans-serif;
    fill: #fff;
}

.tray-ico {
    width: 16px;
    height: 16px;
    margin-right: 12px;
}

.tray-ico.vol {
    margin-right: 10px;
}

.tray-ico.bat {
    width: 18px;
    height: 18px;
    margin-right: 4px;
}

.desktop {
    display: flex;
    height: 1053px;
}

/* Dock */
.dock {
    width: 72px;
    display: flex;
    flex-direction: column;
    background-color: #1c1816;
}

.dock-list {
    height: 983px;
    overflow: hidden;
    padding-top: 4px;
}

.dock-item {
    position: relative;
    width: 64px;
    height: 64px;
    margin: 0 4px 4px;
    border-radius: 6px;
    display: flex;
    align-items: center;
    justify-content: center;
}

.dock-item svg {
    width: 58px;
    height: 58px;
}

.dock-active {
    background-color: #4b4644;
}

.running::before {
    content: "";
    position: absolute;
    left: -1px;
    top: 29px;
    width: 6px;
    height: 6px;
    border-radius: 50%;
    background-color: #e95420;
}

.dock-t {
    font: bold 17px "Open Sans", sans-serif;
    fill: #fff;
}

.dock-ij {
    font: bold 15px "Liberation Mono", monospace;
    fill: #fff;
}

.dock-help {
    font: 34px "Open Sans", sans-serif;
    fill: #fff;
    text-anchor: middle;
}

.dock-apps {
    display: grid;
    grid-template-columns: repeat(3, 6px);
    gap: 6px;
    justify-content: center;
    padding-top: 8px;
}

.dock-apps i {
    height: 6px;
    border-radius: 1px;
    background-color: #eee;
}

.window {
    flex: 1;
    display: flex;
    flex-direction: column;
    min-width: 0;
}

/* Schede firefox */
.tabs-row {
    height: 44px;
    background-color: #2b2b2b;
    display: flex;
    align-items: center;
    padding-left: 3px;
    color: #ddd;
}

.tab {
    width: 221px;
    height: 36px;
    border-radius: 4px;
    display: flex;
    align-items: center;
    padding: 0 12px 0 8px;
}

.tab-active {
    background-color: #585858;
    color: #eee;
}

.tab-other {
    width: 215px;
    margin-left: 5px;
    padding: 0 8px 0 7px;
}

.favicon {
    width: 15px;
    height: 15px;
    margin-right: 6px;
}

.tab-title {
    flex: 1;
    white-space: nowrap;
    overflow: hidden;
    mask-image: linear-gradient(to right, #000 88%, transparent);
}

.tab-x {
    margin-left: 4px;
    font-size: 16px;
    line-height: 1;
}

.tab-new {
    font-size: 22px;
    font-weight: 300;
    margin-left: 20px;
    line-height: 1;
}

.win-controls {
    margin-left: auto;
    display: flex;
    align-items: center;
    gap: 25px;
    padding-right: 9px;
}

.win-min {
    width: 9px;
    height: 2px;
    margin-top: 6px;
    background-color: #ddd;
}

.win-max {
    width: 8px;
    height: 8px;
    border: 1px solid #ddd;
}

.win-close {
    width: 18px;
    height: 18px;
    margin-left: -4px;
    border-radius: 50%;
    background-color: #e95420;
    color: #fff;
    font-size: 18px;
    line-height: 17px;
    text-align: center;
}

/* Barra indirizzi */
.nav-row {
    height: 41px;
    background-color: #5b5b5b;
    border-bottom: 1px solid #333;
    display: flex;
    align-items: center;
    padding-left: 15px;
    gap: 16px;
}

.nav-ico {
    width: 20px;
    height: 20px;
}

.urlbar {
    width: 1350px;
    height: 32px;
    margin-left: 107px;
    background-color: #333;
    border: 1px solid #222;
    border-radius: 3px;
    display: flex;
    align-items: center;
    padding: 0 5px 0 8px;
}

.url-ico {
    width: 16px;
    height: 18px;
    margin-right: 12px;
}

.url-text {
    flex: 1;
    font-size: 15px;
    color: #aaa;
    margin-left: -2px;
}

.url-text b {
    font-weight: 400;
    color: #eee;
}

.url-star {
    width: 18px;
    height: 18px;
}

.nav-tools {
    display: flex;
    gap: 18px;
    margin-left: 111px;
}

.nav-tools svg {
    width: 18px;
    height: 18px;
}

/* Testata balsamiq */
.app-head {
    height: 66px;
    background-color: #38404a;
    color: #eee;
    display: flex;
    flex-direction: column;
}

.head-row {
    display: flex;
    align-items: center;
    padding: 0 16px;
}

.head-row-top {
    height: 27px;
}

.head-row-tools {
    height: 33px;
}

.crumbs {
    width: 825px;
}

.menu {
    display: flex;
    gap: 10px;
}

.head-right {
    margin-left: auto;
    display: flex;
    align-items: center;
}

.pen-btn {
    width: 40px;
    height: 20px;
    margin-right: 12px;
    border-radius: 2px;
    background-color: #5b5f64;
    padding: 0 6px;
}

.pen-btn svg {
    width: 28px;
    height: 20px;
    overflow: visible;
}

.share-btn {
    width: 72px;
    height: 20px;
    margin-right: 12px;
    border-radius: 2px;
    background-color: #3d9ae8;
    color: #fff;
    font-size: 13px;
    display: flex;
    align-items: center;
    gap: 6px;
    padding-left: 8px;
}

.share-btn svg {
    width: 16px;
    height: 18px;
}

.user-pic {
    border: 1px solid #8cc152;
}

.user-pic svg {
    width: 18px;
    height: 18px;
}

.view-btns {
    width: 680px;
    display: flex;
    align-items: center;
}

.view-btns svg {
    width: 20px;
    height: 20px;
    margin-right: 6px;
}

.tb-sep {
    width: 1px;
    height: 22px;
    background-color: #5b636d;
}

.view-btns .tb-sep {
    margin: 0 12px 0 6px;
}

.toolbar {
    display: flex;
    align-items: center;
    gap: 6px;
}

.toolbar svg {
    width: 20px;
    height: 22px;
}

.toolbar .caret-ico {
    width: 27px;
}

.toolbar .tb-lock {
    margin-left: 2px;
}

.toolbar .tb-sep {
    margin: 0 6px;
}

.quick-add {
    width: 111px;
    height: 22px;
    margin-right: 8px;
    border-radius: 2px;
    background-color: #5f6264;
    color: #aaa;
    font-size: 12px;
    font-style: italic;
    display: flex;
    align-items: center;
    gap: 6px;
    padding-left: 5px;
}

.quick-add svg {
    width: 12px;
    height: 12px;
    color: #fff;
    transform: scaleX(-1);
}

.tb-side {
    display: flex;
    align-items: center;
    gap: 6px;
}

.tb-side svg {
    width: 20px;
    height: 22px;
}

.tb-side .tb-sep {
    margin: 0 6px;
}

/* Categorie */
.cats {
    height: 31px;
    background-color: #c8c9cb;
    display: flex;
    align-items: center;
    gap: 4px;
    padding: 0 16px 0 525px;
}

.cat {
    height: 20px;
    padding: 0 7px;
    border: 1px solid #dcdcdc;
    border-radius: 3px;
    background-color: #eee;
    font-size: 12px;
    letter-spacing: -0.4px;
    line-height: 18px;
    color: #444;
    white-space: nowrap;
}

.cat-on {
    background-color: #9a9a9a;
    border-color: #aaa;
    color: #eee;
}

.more-controls {
    margin-left: auto;
    width: 120px;
    display: flex;
    align-items: center;
    gap: 4px;
}

.more-controls svg {
    width: 13px;
    height: 13px;
}

/* Libreria icone */
.library {
    position: relative;
    height: 88px;
    background-color: #eee;
    overflow: hidden;
    display: grid;
    grid-template-columns: 68px 84px 86px 78px 100px 80px 96px 60px 82px 76px 70px 70px 70px 74px 94px 84px 84px 46px 82px 72px 112px 72px 112px;
    padding: 7px 0 0 5px;
}

.lib-item {
    display: flex;
    flex-direction: column;
    align-items: center;
    font-size: 10.5px;
    letter-spacing: -0.35px;
    color: #444;
    white-space: nowrap;
}

.lib-item svg {
    width: 64px;
    height: 48px;
    overflow: visible;
}

.lib-item .lib-logo {
    color: #1d1d1f;
}

.lib-item span {
    line-height: 16px;
    margin-top: 1px;
}

.lib-amazon {
    font: bold 60px "Liberation Sans", sans-serif;
    fill: #1d1d1f;
    text-anchor: middle;
}

.lib-amex {
    font: bold 11px "Liberation Sans", sans-serif;
    fill: #eee;
    text-anchor: middle;
    letter-spacing: -0.3px;
}

.lib-scroll {
    position: absolute;
    left: 3px;
    top: 79px;
    width: 46px;
    height: 6px;
    border-radius: 3px;
    background-color: #777;
}

/* Zona di lavoro */
.workspace {
    flex: 1;
    display: flex;
    min-height: 0;
}

.panel-head {
    height: 36px;
    background-color: #c8c9cb;
    display: flex;
    align-items: center;
    justify-content: space-between;
    padding: 0 15px;
    color: #444;
}

/* Pannello wireframes */
.wf-panel {
    position: relative;
    width: 226px;
    background-color: #eee;
    border-right: 1px solid #ccc;
    display: flex;
    flex-direction: column;
}

.wf-panel .panel-head {
    padding: 0 16px;
}

.panel-ico {
    width: 28px;
    height: 12px;
}

.thumbs {
    flex: 1;
    overflow: hidden;
    display: flex;
    flex-direction: column;
    gap: 16px;
    width: 213px;
    padding: 0;
}

.thumb {
    flex-shrink: 0;
    width: 187px;
    height: 162px;
    margin-left: 15px;
    background-color: #fff;
    display: flex;
    flex-direction: column;
    align-items: center;
    justify-content: flex-end;
    padding-bottom: 4px;
    font-size: 12px;
    color: #444;
}

.thumb-cut {
    height: 29px;
}

.thumb-last {
    padding-bottom: 5px;
}

.thumb-selected .thumb {
    height: 161px;
}

.thumb-pic {
    width: 179px;
    height: 114px;
    margin-bottom: 15px;
}

.thumb-pic-profile {
    height: 111px;
    margin-bottom: 16px;
}

.thumb-pic-trend {
    height: 104px;
    margin-bottom: 19px;
}

.thumb-selected {
    flex-shrink: 0;
    background-color: #3d9ae8;
    padding: 8px 0;
    margin: -8px 0;
}

.thumbs-scroll {
    position: absolute;
    left: 215px;
    top: 485px;
    width: 5px;
    height: 295px;
    border-radius: 3px;
    background-color: #777;
}

/* Area di disegno */
.canvas {
    position: relative;
    width: 1323px;
    background-color: #fff;
    padding: 3px 0 0 28px;
    overflow: hidden;
}

.wf {
    width: 1277px;
    height: 744px;
    border: 3px solid #000;
    display: flex;
    flex-direction: column;
    font-family: "Lato", "Open Sans", sans-serif;
    color: #111;
}

.wf-head {
    height: 64px;
    background-color: #ff8484;
    border-top: 1px solid #c95a5a;
    border-bottom: 3px solid #000;
    display: flex;
    align-items: center;
    justify-content: space-between;
    padding: 0 31px 0 31px;
}

.wf-logo {
    width: 37px;
    height: 48px;
    margin-bottom: 4px;
    color: #111;
}

.wf-links {
    display: flex;
    align-items: center;
    margin-bottom: 4px;
}

.wf-links a {
    color: #1f5ca8;
    font-size: 13px;
    font-weight: 500;
    letter-spacing: 0.1px;
    text-decoration: underline;
    padding: 0 8px;
    line-height: 20px;
    border-left: 2px solid #000;
}

.wf-links a:first-child {
    border-left: none;
}

.wf-links a:last-child {
    padding-right: 0;
}

.wf-body {
    position: relative;
    flex: 1;
}

.wf-search {
    position: absolute;
    left: 991px;
    top: 22px;
    width: 150px;
    height: 23px;
    border: 2.5px solid #000;
    border-radius: 12px;
    display: flex;
    align-items: center;
    gap: 3px;
    padding: 0 0 2px 5px;
    color: #999;
    font-size: 14px;
}

.wf-search svg {
    width: 13px;
    height: 13px;
}

.wf-avatar {
    position: absolute;
    left: 1202px;
    top: 18px;
    width: 32px;
    height: 32px;
    border: 2px solid #000;
    border-radius: 50%;
    overflow: hidden;
    display: flex;
    flex-direction: column;
    align-items: center;
    font-size: 13px;
    line-height: 15px;
}

.wf-avatar span:first-child {
    margin-top: -2px;
}

.wf-side {
    position: absolute;
    left: 77px;
    top: 85px;
    width: 142px;
    display: flex;
    flex-direction: column;
    gap: 2px;
}

.wf-side div {
    height: 26px;
    background-color: #ccc;
    border: 2px solid #000;
    border-radius: 2px 0 0 2px;
    font-size: 13.5px;
    font-weight: 500;
    line-height: 21px;
    padding-left: 3px;
    white-space: nowrap;
}

.wf-box {
    position: absolute;
    left: 217px;
    top: 64px;
    width: 935px;
    height: 470px;
    background-color: #fff;
    border: 2.5px solid #000;
}

.callout {
    position: absolute;
    height: 36px;
    overflow: hidden;
    font-size: 13.5px;
}

.callout svg {
    height: 36px;
    overflow: visible;
}

.callout span {
    position: absolute;
    line-height: 20px;
    white-space: nowrap;
}

.callout-menu {
    left: 1173px;
    top: 62px;
    width: 106px;
}

.callout-menu svg {
    width: 146px;
}

.callout-menu span {
    left: 16px;
    top: 4px;
}

.callout-bg {
    left: 1024px;
    top: 597px;
    width: 172px;
}

.callout-bg svg {
    width: 172px;
}

.callout-bg span {
    left: 18px;
    top: 13px;
}

.wf-foot {
    height: 23px;
    background-color: #bfbfbf;
    border-top: 3px solid #000;
    display: flex;
    align-items: center;
    justify-content: flex-end;
    padding-right: 2px;
}

.wf-foot svg {
    width: 16px;
    height: 14px;
}

.canvas-scroll-v {
    position: absolute;
    left: 1314px;
    top: 68px;
    width: 5px;
    height: 457px;
    border-radius: 3px;
    background-color: #777;
}

.canvas-scroll-h {
    position: absolute;
    left: 4px;
    top: 775px;
    width: 915px;
    height: 5px;
    border-radius: 3px;
    background-color: #777;
}

/* Pannello destro */
.info-panel {
    flex: 1;
    background-color: #eee;
    border-left: 1px solid #ccc;
    display: flex;
    flex-direction: column;
}

.info-body {
    flex: 1;
    padding: 0 15px;
}

.info-panel h4 {
    margin: 0;
    font-size: 14px;
    font-weight: 400;
    color: #444;
    line-height: 20px;
}

.info-body h4 {
    margin-top: 9px;
}

.info-hint {
    margin: 20px 0 0;
    font-size: 12px;
    font-style: italic;
}

.info-alt {
    height: 203px;
    margin: 0 16px 0 15px;
    border-top: 1px solid #ccc;
    padding-top: 10px;
}

.info-alt h4 {
    display: flex;
    justify-content: space-between;
}

.info-alt p {
    margin: 8px 0 0;
    font-size: 12px;
    line-height: 17px;
}
```
